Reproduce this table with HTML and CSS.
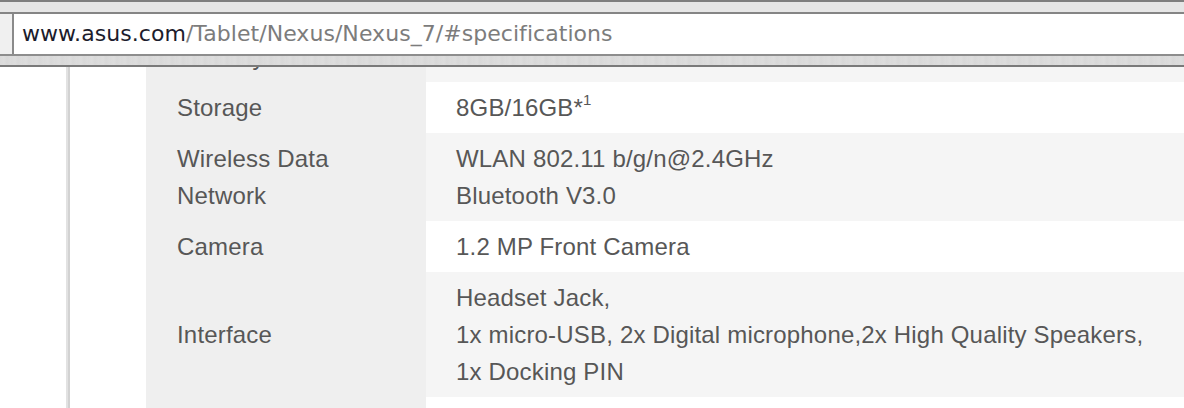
FILE: index.html
```html
<!DOCTYPE html>
<html>
<head>
<meta charset="utf-8">
<link rel="stylesheet" href="styles.css">
</head>
<body>
<div class="chrome">
  <div class="chrome-top"></div>
  <div class="url-row">
    <div class="url-side"></div>
    <div class="url-field"><span class="host">www.asus.com</span><span class="path">/Tablet/Nexus/Nexus_7/#specifications</span></div>
  </div>
  <div class="chrome-bottom"></div>
</div>
<div class="page">
  <div class="gutter"></div>
  <div class="rule"></div>
  <div class="spacer"></div>
  <div class="specs">
    <div class="row odd first">
      <div class="label">Memory</div>
      <div class="value"></div>
    </div>
    <div class="row even">
      <div class="label">Storage</div>
      <div class="value">8GB/16GB*<sup>1</sup></div>
    </div>
    <div class="row odd">
      <div class="label">Wireless Data<br>Network</div>
      <div class="value">WLAN 802.11 b/g/n@2.4GHz<br>Bluetooth V3.0</div>
    </div>
    <div class="row even">
      <div class="label">Camera</div>
      <div class="value">1.2 MP Front Camera</div>
    </div>
    <div class="row odd">
      <div class="label mid">Interface</div>
      <div class="value">Headset Jack,<br>1x micro-USB, 2x Digital microphone,2x High Quality Speakers,<br>1x Docking PIN</div>
    </div>
    <div class="row even blank">
      <div class="label"></div>
      <div class="value"></div>
    </div>
  </div>
</div>
</body>
</html>
```

FILE: styles.css
```css
html, body {
  margin: 0;
  padding: 0;
  background: #ffffff;
  overflow: hidden;
}
body {
  width: 1184px;
  height: 408px;
}
.chrome {
  display: flex;
  flex-direction: column;
}
.chrome-top {
  height: 10px;
  background: #e6e6e6;
  border-top: 2px solid #7f7f7f;
  border-bottom: 2px solid #858585;
}
.url-row {
  display: flex;
  height: 40px;
}
.url-side {
  width: 12px;
  background: #f0f0f0;
  border-right: 2px solid #8a8a8a;
}
.url-field {
  flex: 1;
  background: #ffffff;
  padding-left: 8px;
  font-family: "DejaVu Sans", sans-serif;
  font-size: 22px;
  line-height: 40px;
  white-space: nowrap;
  letter-spacing: 0.05px;
}
.host {
  color: #1c1c2c;
}
.path {
  color: #7c7c7c;
}
.chrome-bottom {
  height: 9px;
  border-top: 2px solid #8d8d8d;
  border-bottom: 2px solid #7a7a7a;
  background: repeating-linear-gradient(90deg, #dadada 0, #dddddd 4px, #d8d8d8 7px, #dcdcdc 11px);
}
.page {
  display: flex;
  height: 341px;
  overflow: hidden;
}
.gutter {
  width: 66px;
  flex: none;
}
.rule {
  width: 2px;
  flex: none;
  background: #e2e2e2;
  border-right: 2px solid #d2d2d2;
}
.spacer {
  width: 76px;
  flex: none;
}
.specs {
  flex: 1;
  display: flex;
  flex-direction: column;
  font-family: "Liberation Sans", Arial, sans-serif;
  font-size: 24px;
  line-height: 37px;
  color: #575757;
  letter-spacing: 0.18px;
}
.row {
  display: grid;
  grid-template-columns: 280px 1fr;
}
.row.first {
  margin-top: -36px;
  height: 51px;
}
.row.blank {
  height: 51px;
}
.label {
  background: #efefef;
  padding: 7px 0 7px 31px;
}
.label.mid {
  display: flex;
  flex-direction: column;
  justify-content: center;
}
.value {
  padding: 7px 0 7px 30px;
  white-space: nowrap;
}
.row.odd .value {
  background: #f5f5f5;
}
.row.even .value {
  background: #ffffff;
}
sup {
  font-size: 15px;
  line-height: 0;
  vertical-align: 11px;
}
```
